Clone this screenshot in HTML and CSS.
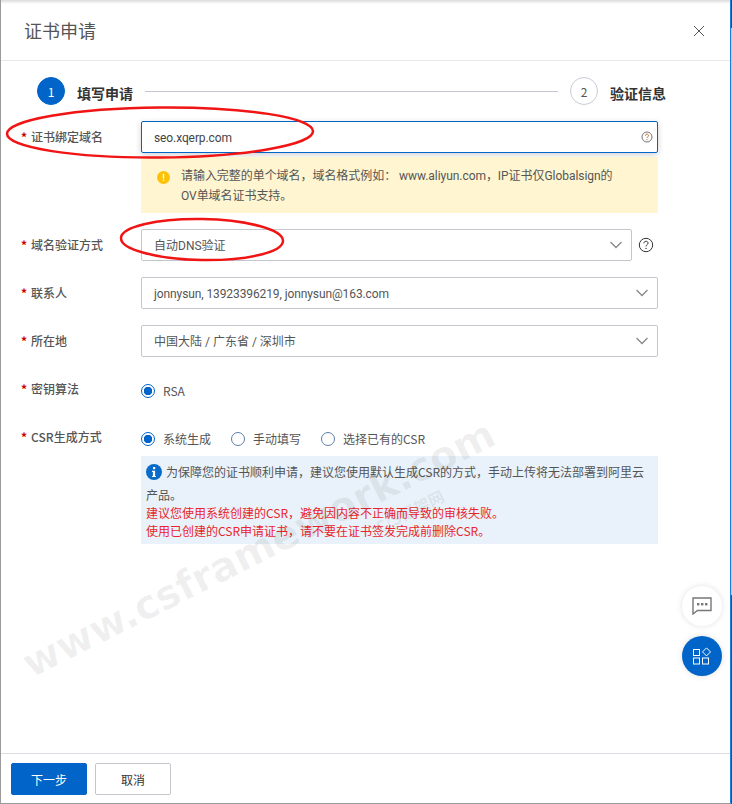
FILE: index.html
```html
<!DOCTYPE html>
<html lang="zh-CN">
<head>
<meta charset="utf-8">
<title>证书申请</title>
<link rel="stylesheet" href="styles.css">
</head>
<body>
<div class="dialog">
  <header class="head">
    <h1 class="title">证书申请</h1>
    <svg class="close" width="12" height="12" viewBox="0 0 12 12"><path d="M1 1l10 10M11 1L1 11" fill="none" stroke="#555" stroke-width="1"/></svg>
  </header>
  <div class="steps">
    <span class="num num-on">1</span>
    <span class="step-label">填写申请</span>
    <span class="step-line"></span>
    <span class="num">2</span>
    <span class="step-label">验证信息</span>
  </div>
  <form class="form">
    <div class="row">
      <label class="lab">证书绑定域名</label>
      <div class="field">
        <div class="box box-focus">
          <span class="val val-latin">seo.xqerp.com</span>
          <svg class="q-small" width="12" height="12" viewBox="0 0 12 12"><circle cx="6" cy="6" r="5" fill="none" stroke="#777" stroke-width="1"/><path d="M4.400 4.700C4.400 3.700 5.100 3.200 6 3.200s1.600.6 1.600 1.400c0 1.200-1.600 1.200-1.600 2.400" fill="none" stroke="#c0722c" stroke-width="1"/><circle cx="6" cy="8.700" r=".6" fill="#c0722c"/></svg>
        </div>
        <div class="warn">
          <svg class="warn-ico" width="13" height="13" viewBox="0 0 12 12"><circle cx="6" cy="6" r="6" fill="#fcc20a"/><rect x="5.400" y="2.600" width="1.200" height="4.400" fill="#fff"/><rect x="5.400" y="8" width="1.200" height="1.300" fill="#fff"/></svg>
          <p class="warn-text">请输入完整的单个域名，域名格式例如： www.aliyun.com，IP证书仅Globalsign的<br>OV单域名证书支持。</p>
        </div>
      </div>
    </div>
    <div class="row">
      <label class="lab">域名验证方式</label>
      <div class="field field-help">
        <div class="box grow"><span class="val">自动DNS验证</span><svg class="chev" width="14" height="8" viewBox="0 0 14 8"><path d="M1.500 1l5.500 5.500L12.500 1" fill="none" stroke="#888" stroke-width="1.300"/></svg></div>
        <svg class="help" width="16" height="16" viewBox="0 0 16 16"><circle cx="8" cy="8" r="6.700" fill="none" stroke="#333" stroke-width="1"/><path d="M5.900 6.300C5.900 5 6.800 4.300 8 4.300s2.100.8 2.100 1.800c0 1.600-2.100 1.600-2.100 3.300" fill="none" stroke="#333" stroke-width="1"/><circle cx="8" cy="11.400" r=".7" fill="#333"/></svg>
      </div>
    </div>
    <div class="row">
      <label class="lab">联系人</label>
      <div class="field"><div class="box"><span class="val val-latin">jonnysun, 13923396219, jonnysun@163.com</span><svg class="chev" width="14" height="8" viewBox="0 0 14 8"><path d="M1.500 1l5.500 5.500L12.500 1" fill="none" stroke="#888" stroke-width="1.300"/></svg></div></div>
    </div>
    <div class="row">
      <label class="lab">所在地</label>
      <div class="field"><div class="box"><span class="val">中国大陆 / 广东省 / 深圳市</span><svg class="chev" width="14" height="8" viewBox="0 0 14 8"><path d="M1.500 1l5.500 5.500L12.500 1" fill="none" stroke="#888" stroke-width="1.300"/></svg></div></div>
    </div>
    <div class="row">
      <label class="lab">密钥算法</label>
      <div class="field"><div class="radios"><span class="radio"><i class="dot dot-on"></i>RSA</span></div></div>
    </div>
    <div class="row">
      <label class="lab">CSR生成方式</label>
      <div class="field">
        <div class="radios">
          <span class="radio"><i class="dot dot-on"></i>系统生成</span>
          <span class="radio"><i class="dot"></i>手动填写</span>
          <span class="radio"><i class="dot"></i>选择已有的CSR</span>
        </div>
        <div class="info">
          <p class="info-main"><svg class="info-ico" width="16" height="16" viewBox="0 0 16 16"><circle cx="8" cy="8" r="8" fill="#0a6cc9"/><rect x="7" y="3" width="2.200" height="2.200" fill="#fff"/><path d="M6 6.700h3.100v5.200H10v1.200H6v-1.200h.9v-4H6z" fill="#fff"/></svg>为保障您的证书顺利申请，建议您使用默认生成CSR的方式，手动上传将无法部署到阿里云产品。</p>
          <p class="info-red">建议您使用系统创建的CSR，避免因内容不正确而导致的审核失败。</p>
          <p class="info-red">使用已创建的CSR申请证书，请不要在证书签发完成前删除CSR。</p>
        </div>
      </div>
    </div>
  </form>
  <footer class="foot">
    <button class="btn btn-main" type="button">下一步</button>
    <button class="btn" type="button">取消</button>
  </footer>
</div>

<div class="mark"><span class="mark-url">www.csframework.com</span><span class="mark-cn">C/S框架网</span></div>

<svg class="ink" width="732" height="804" viewBox="0 0 732 804">
  <ellipse cx="160" cy="132.500" rx="153" ry="25" transform="rotate(-0.5 160 132)" fill="none" stroke="#f01414" stroke-width="2.500"/>
  <ellipse cx="202" cy="239.500" rx="81" ry="20.500" transform="rotate(1 202 240)" fill="none" stroke="#f01414" stroke-width="2.500"/>
</svg>

<button class="fab fab-chat" type="button" aria-label="chat"><svg width="20" height="18" viewBox="0 0 20 18"><path d="M1 1h18v12.500H5.500L1 17z" fill="none" stroke="#777" stroke-width="1.400"/><rect x="5" y="6" width="2.400" height="2.400" fill="#777"/><rect x="9" y="6" width="2.400" height="2.400" fill="#777"/><rect x="13" y="6" width="2.400" height="2.400" fill="#777"/></svg></button>
<button class="fab fab-apps" type="button" aria-label="apps"><svg width="18" height="18" viewBox="0 0 18 18"><g fill="none" stroke="#fff" stroke-width="1"><rect x=".5" y="2.500" width="6" height="6"/><rect x=".5" y="11" width="6" height="6"/><rect x="9.500" y="11" width="6" height="6"/><path d="M13.500 .9l4 4-4 4-4-4z"/></g></svg></button>
</body>
</html>
```
FILE: styles.css
```css
* { box-sizing: border-box; }
html, body { margin: 0; padding: 0; }
body {
  width: 732px;
  height: 804px;
  position: relative;
  overflow: hidden;
  background: #fff;
  font-family: "Noto Sans CJK SC", "Noto Sans", sans-serif;
  font-size: 12px;
  color: #555;
}
.dialog {
  width: 732px;
  height: 804px;
  position: relative;
  display: flex;
  flex-direction: column;
  border-left: 1px solid #9b9b9b;
  border-right: 2px solid #1a7fdc;
  border-bottom: 1px solid #9b9b9b;
  background: #fff;
  box-shadow: inset 0 4px 3px -2px #dcdcdc;
}
.dialog::after {
  content: "";
  position: absolute;
  right: -2px;
  top: 0;
  bottom: -1px;
  width: 1px;
  background: linear-gradient(#0a4f9c 0 28px, #a8d0f0 28px 595px, #0a58a8 595px);
}
.head {
  height: 61px;
  flex: none;
  display: flex;
  align-items: center;
  justify-content: space-between;
  padding: 0 25px 0 23px;
  border-bottom: 1px solid #e8e8e8;
}
.title {
  margin: 0;
  font-size: 18px;
  font-weight: 400;
  color: #555;
}
.close { display: block; margin-top: 2px; }
.steps {
  flex: none;
  display: flex;
  align-items: center;
  height: 28px;
  margin: 16px 64px 0 36px;
}
.num {
  width: 28px;
  height: 28px;
  flex: none;
  border: 1px solid #c8ccd6;
  border-radius: 50%;
  display: flex;
  align-items: center;
  justify-content: center;
  color: #555;
  font-size: 12px;
}
.num-on { background: #0064c8; border-color: #0064c8; color: #fff; }
.step-label {
  margin-left: 12px;
  font-size: 14px;
  font-weight: 700;
  color: #333;
  position: relative;
  top: 2px;
}
.step-line {
  flex: 1;
  height: 1px;
  margin: 0 12px;
  background: #c4c6d0;
}
.form {
  flex: none;
  padding: 16px 72px 0 20px;
  display: flex;
  flex-direction: column;
  gap: 16px;
}
.row { display: flex; }
.lab {
  width: 120px;
  flex: none;
  line-height: 32px;
  font-weight: 500;
  color: #555;
}
.lab::before {
  content: "*";
  color: #c80000;
  font-weight: 700;
  margin-right: 4px;
}
.field { flex: 1; min-width: 0; }
.field-help { display: flex; align-items: center; gap: 6px; }
.box {
  height: 32px;
  display: flex;
  align-items: center;
  justify-content: space-between;
  padding: 0 8px 0 12px;
  border: 1px solid #c4c6cc;
  border-radius: 2px;
  background: #fff;
  color: #555;
}
.val {
  font-family: Roboto, "Noto Sans CJK SC", sans-serif;
  line-height: 18px;
  padding-top: 2px;
}
.val-latin { letter-spacing: -.1px; }
.box-focus {
  border-color: #0064c8;
  box-shadow: 0 2px 6px rgba(0, 0, 0, .18);
  padding-right: 4px;
  color: #444;
}
.grow { flex: 1; min-width: 0; }
.q-small { display: block; }
.help { flex: none; margin-right: 4px; }
.warn {
  margin-top: 4px;
  height: 56px;
  padding: 9px 12px 0 16px;
  display: flex;
  gap: 11px;
  background: #fff5d0;
}
.warn-ico { flex: none; margin-top: 5px; }
.warn-text {
  margin: 0;
  font-family: Roboto, "Noto Sans CJK SC", sans-serif;
  line-height: 20px;
  letter-spacing: -.05px;
  color: #555;
}
.radios {
  display: flex;
  gap: 20px;
  line-height: 20px;
  padding-top: 8px;
  height: 32px;
}
.radio { display: flex; align-items: center; gap: 8px; height: 20px; }
.dot {
  width: 14px;
  height: 14px;
  border: 1px solid #5b7fa8;
  border-radius: 50%;
  background: #fff;
  display: block;
  flex: none;
}
.dot-on {
  border-color: #0064c8;
  background: radial-gradient(circle, #0064c8 0 4px, #fff 4.500px);
}
.info {
  margin-top: 3px;
  height: 88px;
  padding: 4px 12px 0 5px;
  background: #e9f2fa;
  color: #555;
}
.info-main { margin: 0 0 -2px; line-height: 23px; }
.info-ico { vertical-align: -3px; margin-right: 4px; }
.info-red { margin: 0; line-height: 18px; color: #e8252b; }
.foot {
  margin-top: auto;
  flex: none;
  height: 50px;
  padding: 9px 10px 0;
  display: flex;
  gap: 8px;
  border-top: 1px solid #dcdde2;
}
.btn {
  width: 76px;
  height: 32px;
  padding: 0;
  border: 1px solid #c4c6cc;
  border-radius: 2px;
  background: #fff;
  color: #333;
  font: inherit;
}
.btn-main { background: #0064c8; border-color: #0064c8; color: #fff; }
.mark {
  position: absolute;
  left: 0;
  top: 0;
  width: 732px;
  height: 804px;
  pointer-events: none;
}
.mark-url {
  position: absolute;
  left: -3px;
  top: 523px;
  width: 525px;
  transform: rotate(-26.7deg);
  font-family: "DejaVu Sans", sans-serif;
  font-weight: 700;
  font-size: 40px;
  line-height: 50px;
  white-space: nowrap;
  color: rgba(0, 0, 0, .06);
}
.mark-cn {
  position: absolute;
  left: 372px;
  top: 499px;
  transform: rotate(-26.7deg);
  font-family: "Noto Sans CJK SC", sans-serif;
  font-weight: 700;
  font-size: 16px;
  white-space: nowrap;
  color: rgba(0, 0, 0, .07);
}
.ink { position: absolute; left: 0; top: 0; pointer-events: none; }
.fab {
  position: absolute;
  left: 682px;
  width: 40px;
  height: 40px;
  padding: 0;
  border: 0;
  border-radius: 50%;
  display: flex;
  align-items: center;
  justify-content: center;
}
.fab-chat { top: 586px; background: #fff; box-shadow: 0 0 6px rgba(0, 0, 0, .12); }
.fab-apps { top: 636px; background: #0064c8; box-shadow: 0 0 6px rgba(0, 0, 0, .12); }
```
